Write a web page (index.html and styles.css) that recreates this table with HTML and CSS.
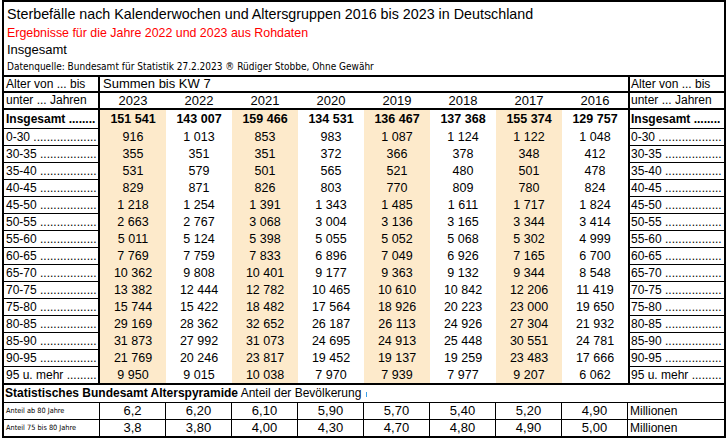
FILE: index.html
```html
<!DOCTYPE html>
<html lang="de">
<head>
<meta charset="utf-8">
<title>Sterbefälle nach Kalenderwochen</title>
<link rel="stylesheet" href="styles.css">
</head>
<body>
<div class="sheet">
  <div class="title">
    <div class="t1">Sterbefälle nach Kalenderwochen und Altersgruppen 2016 bis 2023 in Deutschland</div>
    <div class="t2">Ergebnisse für die Jahre 2022 und 2023 aus Rohdaten</div>
    <div class="t3">Insgesamt</div>
    <div class="t4">Datenquelle: Bundesamt für Statistik 27.2.2023 ® Rüdiger Stobbe, Ohne Gewähr</div>
  </div>

  <div class="row ra">
    <div class="lab">Alter von ... bis</div>
    <div class="span8">Summen bis KW 7</div>
    <div class="rlab">Alter von ... bis</div>
  </div>
  <div class="row rb">
    <div class="lab">unter ... Jahren</div>
    <div class="yr">2023</div><div class="yr">2022</div><div class="yr">2021</div><div class="yr">2020</div>
    <div class="yr">2019</div><div class="yr">2018</div><div class="yr">2017</div><div class="yr">2016</div>
    <div class="rlab">unter ... Jahren</div>
  </div>
  <div class="row rc">
    <div class="lab">Insgesamt ........</div>
    <div class="num sh">151 541</div><div class="num">143 007</div><div class="num sh">159 466</div><div class="num">134 531</div>
    <div class="num sh">136 467</div><div class="num">137 368</div><div class="num sh">155 374</div><div class="num">129 757</div>
    <div class="rlab">Insgesamt ........</div>
  </div>

  <div class="row rd"><div class="lab">0-30 ...................</div>
    <div class="num sh">916</div><div class="num">1 013</div><div class="num sh">853</div><div class="num">983</div><div class="num sh">1 087</div><div class="num">1 124</div><div class="num sh">1 122</div><div class="num">1 048</div>
    <div class="rlab">0-30 ...................</div></div>
  <div class="row rd"><div class="lab">30-35 .................</div>
    <div class="num sh">355</div><div class="num">351</div><div class="num sh">351</div><div class="num">372</div><div class="num sh">366</div><div class="num">378</div><div class="num sh">348</div><div class="num">412</div>
    <div class="rlab">30-35 .................</div></div>
  <div class="row rd"><div class="lab">35-40 .................</div>
    <div class="num sh">531</div><div class="num">579</div><div class="num sh">501</div><div class="num">565</div><div class="num sh">521</div><div class="num">480</div><div class="num sh">501</div><div class="num">478</div>
    <div class="rlab">35-40 .................</div></div>
  <div class="row rd"><div class="lab">40-45 .................</div>
    <div class="num sh">829</div><div class="num">871</div><div class="num sh">826</div><div class="num">803</div><div class="num sh">770</div><div class="num">809</div><div class="num sh">780</div><div class="num">824</div>
    <div class="rlab">40-45 .................</div></div>
  <div class="row rd"><div class="lab">45-50 .................</div>
    <div class="num sh">1 218</div><div class="num">1 254</div><div class="num sh">1 391</div><div class="num">1 343</div><div class="num sh">1 485</div><div class="num">1 611</div><div class="num sh">1 717</div><div class="num">1 824</div>
    <div class="rlab">45-50 .................</div></div>
  <div class="row rd"><div class="lab">50-55 .................</div>
    <div class="num sh">2 663</div><div class="num">2 767</div><div class="num sh">3 068</div><div class="num">3 004</div><div class="num sh">3 136</div><div class="num">3 165</div><div class="num sh">3 344</div><div class="num">3 414</div>
    <div class="rlab">50-55 .................</div></div>
  <div class="row rd"><div class="lab">55-60 .................</div>
    <div class="num sh">5 011</div><div class="num">5 124</div><div class="num sh">5 398</div><div class="num">5 055</div><div class="num sh">5 052</div><div class="num">5 068</div><div class="num sh">5 302</div><div class="num">4 999</div>
    <div class="rlab">55-60 .................</div></div>
  <div class="row rd"><div class="lab">60-65 .................</div>
    <div class="num sh">7 769</div><div class="num">7 759</div><div class="num sh">7 833</div><div class="num">6 896</div><div class="num sh">7 049</div><div class="num">6 926</div><div class="num sh">7 165</div><div class="num">6 700</div>
    <div class="rlab">60-65 .................</div></div>
  <div class="row rd"><div class="lab">65-70 .................</div>
    <div class="num sh">10 362</div><div class="num">9 808</div><div class="num sh">10 401</div><div class="num">9 177</div><div class="num sh">9 363</div><div class="num">9 132</div><div class="num sh">9 344</div><div class="num">8 548</div>
    <div class="rlab">65-70 .................</div></div>
  <div class="row rd"><div class="lab">70-75 .................</div>
    <div class="num sh">13 382</div><div class="num">12 444</div><div class="num sh">12 782</div><div class="num">10 465</div><div class="num sh">10 610</div><div class="num">10 842</div><div class="num sh">12 206</div><div class="num">11 419</div>
    <div class="rlab">70-75 .................</div></div>
  <div class="row rd"><div class="lab">75-80 .................</div>
    <div class="num sh">15 744</div><div class="num">15 422</div><div class="num sh">18 482</div><div class="num">17 564</div><div class="num sh">18 926</div><div class="num">20 223</div><div class="num sh">23 000</div><div class="num">19 650</div>
    <div class="rlab">75-80 .................</div></div>
  <div class="row rd"><div class="lab">80-85 .................</div>
    <div class="num sh">29 169</div><div class="num">28 362</div><div class="num sh">32 652</div><div class="num">26 187</div><div class="num sh">26 113</div><div class="num">24 926</div><div class="num sh">27 304</div><div class="num">21 932</div>
    <div class="rlab">80-85 .................</div></div>
  <div class="row rd"><div class="lab">85-90 .................</div>
    <div class="num sh">31 873</div><div class="num">27 992</div><div class="num sh">31 073</div><div class="num">24 695</div><div class="num sh">24 913</div><div class="num">25 448</div><div class="num sh">30 551</div><div class="num">24 781</div>
    <div class="rlab">85-90 .................</div></div>
  <div class="row rd"><div class="lab">90-95 .................</div>
    <div class="num sh">21 769</div><div class="num">20 246</div><div class="num sh">23 817</div><div class="num">19 452</div><div class="num sh">19 137</div><div class="num">19 259</div><div class="num sh">23 483</div><div class="num">17 666</div>
    <div class="rlab">90-95 .................</div></div>
  <div class="row rd last"><div class="lab">95 u. mehr .........</div>
    <div class="num sh">9 950</div><div class="num">9 015</div><div class="num sh">10 038</div><div class="num">7 970</div><div class="num sh">7 939</div><div class="num">7 977</div><div class="num sh">9 207</div><div class="num">6 062</div>
    <div class="rlab">95 u. mehr .........</div></div>

  <div class="stat"><b>Statistisches Bundesamt Alterspyramide</b> Anteil der Bevölkerung<span class="cursor"></span></div>

  <div class="row rn">
    <div class="small">Anteil ab 80 Jahre</div>
    <div class="val">6,2</div><div class="val">6,20</div><div class="val">6,10</div><div class="val">5,90</div>
    <div class="val">5,70</div><div class="val">5,40</div><div class="val">5,20</div><div class="val">4,90</div>
    <div class="unit">Millionen</div>
  </div>
  <div class="row rn end">
    <div class="small">Anteil 75 bis 80 Jahre</div>
    <div class="val">3,8</div><div class="val">3,80</div><div class="val">4,00</div><div class="val">4,30</div>
    <div class="val">4,70</div><div class="val">4,80</div><div class="val">4,90</div><div class="val">5,00</div>
    <div class="unit">Millionen</div>
  </div>
</div>
</body>
</html>
```

FILE: styles.css
```css
* { box-sizing: border-box; }

body {
  margin: 0;
  background: #fff;
  color: #000;
  font-family: "Liberation Sans", Arial, sans-serif;
}

.sheet {
  margin: 0 0 0 2px;
  width: 724px;
  border: 2px solid #000;
}

.title {
  height: 75px;
  border-bottom: 2px solid #000;
  padding: 2px 0 0 3px;
  white-space: nowrap;
}
.t1 { font-size: 14.3px; line-height: 21px; }
.t2 { font-size: 12.4px; line-height: 16px; color: #ff0000; }
.t3 { font-size: 13px; line-height: 17px; }
.t4 { font-family: "DejaVu Sans Condensed", "DejaVu Sans", sans-serif; font-size: 10px; line-height: 18px; }

.row {
  display: grid;
  grid-template-columns: 96px repeat(8, 66px) 96px;
  font-size: 12px;
}
.row > div {
  white-space: nowrap;
  overflow: hidden;
}

.lab {
  border-right: 2px solid #000;
  padding-left: 2px;
}
.rlab {
  border-left: 2px solid #000;
  padding-left: 1px;
}
.span8 {
  grid-column: span 8;
  padding-left: 3px;
  font-size: 13px;
}

.ra { height: 16px; border-bottom: 2px solid #000; line-height: 14px; }
.rb { height: 17px; border-bottom: 2px solid #000; line-height: 15px; }
.rb .yr { text-align: center; font-size: 13px; }

.rc { height: 19px; line-height: 18px; font-weight: bold; }
.rc .lab, .rc .rlab { border-bottom: 1px solid #000; }

.rd { height: 17px; line-height: 16px; }
.rd .lab, .rd .rlab { border-bottom: 1px solid #000; }
.rd.last { border-bottom: 2px solid #000; height: 18px; }
.rd.last .lab, .rd.last .rlab { border-bottom: 0; }

.num { text-align: center; font-size: 12.5px; }
.sh { background: #fdeacb; }

.stat {
  position: relative;
  height: 18px;
  line-height: 17px;
  border-bottom: 1px solid #000;
  padding-left: 1px;
  font-size: 12px;
  white-space: nowrap;
}
.cursor {
  position: absolute;
  left: 362px;
  top: 7px;
  width: 1px;
  height: 5px;
  background: #3aa0e8;
}

.rn { height: 17px; line-height: 16px; border-bottom: 1px solid #000; }
.rn.end { border-bottom: 0; height: 16px; }
.rn > div { border-right: 1px solid #000; }
.rn > div:last-child { border-right: 0; }
.small {
  font-family: "DejaVu Sans Condensed", "DejaVu Sans", sans-serif;
  font-size: 7.3px;
  padding-left: 2px;
}
.val { text-align: center; font-size: 13px; }
.unit { padding-left: 2px; font-size: 12px; }
```
